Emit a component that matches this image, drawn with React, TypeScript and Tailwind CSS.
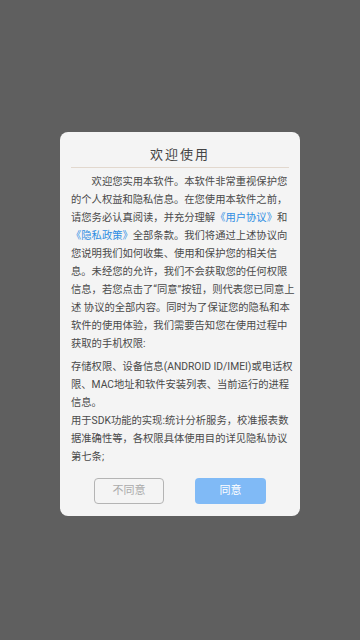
import React from 'react'

const font = { fontFamily: 'Roboto, "Noto Sans CJK SC", sans-serif' }

const intro: React.ReactNode[] = [
  <span className="pl-[2em]">欢迎您实用本软件。本软件非常重视保护您</span>,
  '的个人权益和隐私信息。在您使用本软件之前，',
  <>
    请您务必认真阅读，并充分理解<span className="text-[#2f8ee3]">《用户协议》</span>和
  </>,
  <>
    <span className="text-[#2f8ee3]">《隐私政策》</span>全部条款。我们将通过上述协议向
  </>,
  '您说明我们如何收集、使用和保护您的相关信',
  '息。未经您的允许，我们不会获取您的任何权限',
  '信息，若您点击了“同意”按钮，则代表您已同意上',
  '述 协议的全部内容。同时为了保证您的隐私和本',
  '软件的使用体验，我们需要告知您在使用过程中',
  '获取的手机权限:',
]

const perms = [
  '存储权限、设备信息(ANDROID ID/IMEI)或电话权',
  '限、MAC地址和软件安装列表、当前运行的进程',
  '信息。',
  '用于SDK功能的实现:统计分析服务，校准报表数',
  '据准确性等，各权限具体使用目的详见隐私协议',
  '第七条;',
]

function Lines({ lines }: { lines: React.ReactNode[] }) {
  return (
    <p className="text-[10.3px] leading-[18px] text-[#4a4a4a]">
      {lines.map((line, i) => (
        <span key={i} className="block whitespace-nowrap">
          {line}
        </span>
      ))}
    </p>
  )
}

export default function App() {
  return (
    <div className="h-[640px] w-[360px] bg-[#5f5f5f] pt-[132px]" style={font}>
      <div className="mx-auto w-[240px] rounded-[8px] bg-[#f4f4f4] px-[11px] pt-[12px] pb-[12px]">
        <h1 className="border-b border-[#e2d8ce] pb-[1px] text-center text-[13px] leading-[22px] tracking-[2px] text-[#444]">
          欢迎使用
        </h1>

        <div className="mt-[5px]">
          <Lines lines={intro} />
          <div className="mt-[5px]">
            <Lines lines={perms} />
          </div>
        </div>

        {/* Buttons */}
        <div className="mt-[12px] flex justify-center gap-[31px]">
          <button className="h-[26px] w-[70px] rounded-[4px] border border-[#b4b4b4] text-[11px] text-[#ababab]">
            不同意
          </button>
          <button className="h-[26px] w-[71px] rounded-[4px] bg-[#80baf6] text-[11px] text-white">
            同意
          </button>
        </div>
      </div>
    </div>
  )
}
